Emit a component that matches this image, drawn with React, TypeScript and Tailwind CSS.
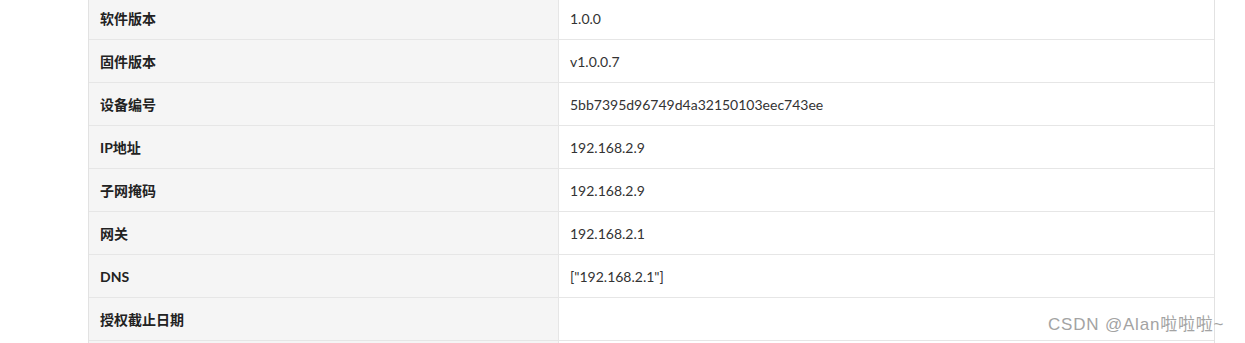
import React from "react";

const ROWS: { label: string; value: string }[] = [
  { label: "软件版本", value: "1.0.0" },
  { label: "固件版本", value: "v1.0.0.7" },
  { label: "设备编号", value: "5bb7395d96749d4a32150103eec743ee" },
  { label: "IP地址", value: "192.168.2.9" },
  { label: "子网掩码", value: "192.168.2.9" },
  { label: "网关", value: "192.168.2.1" },
  { label: "DNS", value: '["192.168.2.1"]' },
  { label: "授权截止日期", value: "" },
  { label: "", value: "" },
];

const App = () => {
  return (
    <div className="relative w-[1245px] h-[343px] overflow-hidden bg-white">
      <div
        className="ml-[88px] -mt-[3px] w-[1127px] border-l border-r border-[#e2e2e2] text-[14px] text-[#333]"
        style={{ fontFamily: '"Lato", "Noto Sans CJK SC", sans-serif' }}
      >
        {ROWS.map((row, i) => (
          <div key={i} className="grid grid-cols-[470px_1fr] border-b border-[#e6e6e6]">
            <div className="h-[42px] flex items-center px-[11px] bg-[#f5f5f5] border-r border-[#e6e6e6] font-bold text-[#222]">
              {row.label}
            </div>
            <div className="h-[42px] flex items-center px-[11px]">{row.value}</div>
          </div>
        ))}
      </div>
      {/* watermark */}
      <div
        className="absolute left-[1048px] top-[315px] text-[17px] leading-[20px] tracking-[0.8px] text-[#a3a3a3] whitespace-nowrap"
        style={{ fontFamily: '"Liberation Sans", "Noto Sans CJK SC", sans-serif' }}
      >
        CSDN @Alan啦啦啦~
      </div>
    </div>
  );
};

export default App;
